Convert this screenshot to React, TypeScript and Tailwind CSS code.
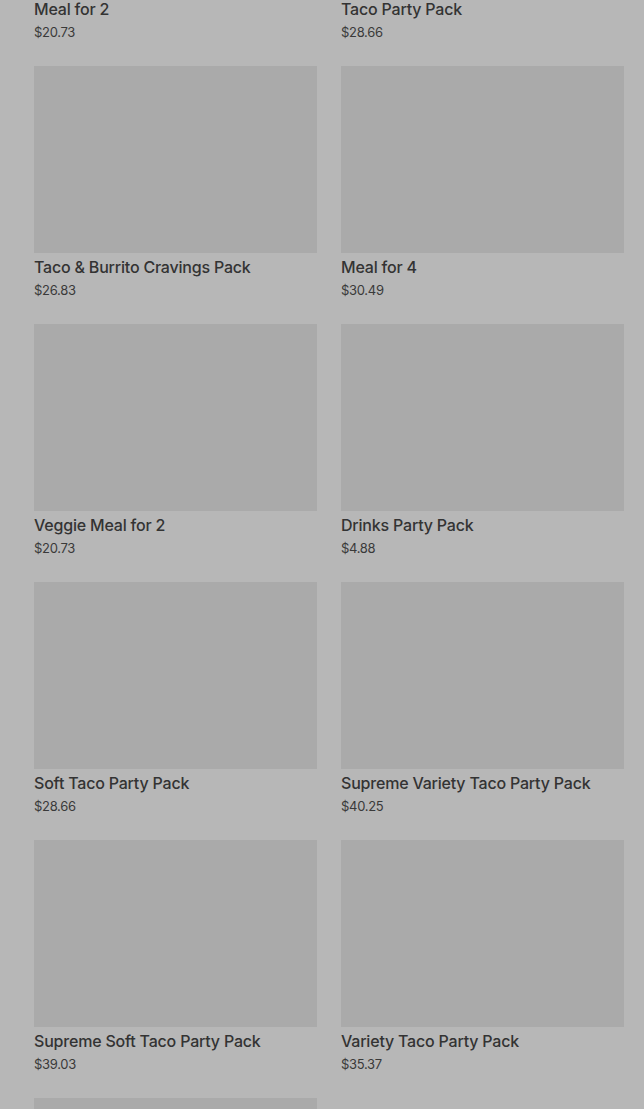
const items = [
  { name: "Meal for 2", price: "$20.73" },
  { name: "Taco Party Pack", price: "$28.66" },
  { name: "Taco & Burrito Cravings Pack", price: "$26.83" },
  { name: "Meal for 4", price: "$30.49" },
  { name: "Veggie Meal for 2", price: "$20.73" },
  { name: "Drinks Party Pack", price: "$4.88" },
  { name: "Soft Taco Party Pack", price: "$28.66" },
  { name: "Supreme Variety Taco Party Pack", price: "$40.25" },
  { name: "Supreme Soft Taco Party Pack", price: "$39.03" },
  { name: "Variety Taco Party Pack", price: "$35.37" },
  { name: "Nachos Party Pack", price: "$24.19" },
];

function ProductCard({ name, price }: { name: string; price: string }) {
  return (
    <div className="flex flex-col">
      <div className="h-[187px] w-full bg-[#aaaaaa]" />
      <div className="mt-[4px] text-[16px] font-medium leading-[20px] tracking-[-0.2px] text-[#333333]">{name}</div>
      <div className="mt-[4px] text-[13px] leading-[18px] tracking-[-0.3px] text-[#3a3a3a]">{price}</div>
    </div>
  );
}

export default function App() {
  return (
    <main className="h-[1109px] overflow-hidden bg-[#b7b7b7] pl-[34px] pr-[20px] font-['Inter','Liberation_Sans',sans-serif]">
      <div className="mt-[-192px] grid grid-cols-2 gap-x-[24px] gap-y-[25px]">
        {items.map(item => (
          <ProductCard key={item.name} name={item.name} price={item.price} />
        ))}
      </div>
    </main>
  );
}
